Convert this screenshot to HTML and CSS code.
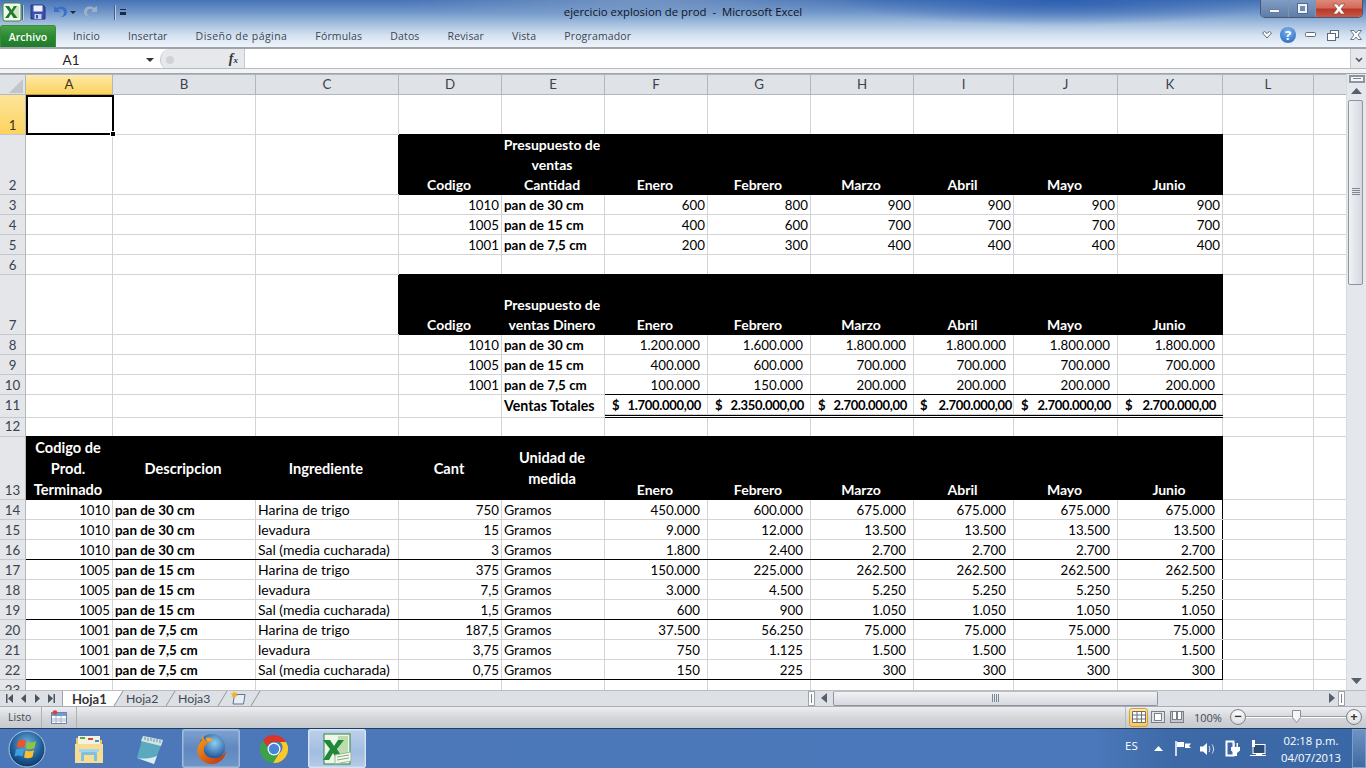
FILE: index.html
```html
<!DOCTYPE html>
<html lang="es">
<head>
<meta charset="utf-8">
<title>ejercicio explosion de prod - Microsoft Excel</title>
<link rel="stylesheet" href="styles.css">
</head>
<body>
<div class="app">
  <header class="chrome">
    <div class="titlebar">
      <div class="qat">
        <svg class="ico-app" width="20" height="20" viewBox="0 0 20 20"><rect x="1" y="1" width="18" height="18" rx="2" fill="#f3f8ef" stroke="#3f8a3f"/><rect x="11" y="4" width="6" height="12" fill="#cfe5c4"/><path d="M3 4h4l2.5 4L12 4h3l-4 6 4.500 6h-4l-2.500-4-2.500 4H3l4.500-6z" fill="#1f7a2c"/></svg>
        <span class="qsep"></span>
        <svg class="ico-save" width="16" height="16" viewBox="0 0 16 16"><path d="M1 1h12l2 2v12H1z" fill="#3b4fae" stroke="#27357f"/><rect x="3.500" y="1.500" width="9" height="6" fill="#eef1fb"/><rect x="4.500" y="10" width="7" height="5" fill="#c8cfe8"/><rect x="6" y="11" width="2" height="3.500" fill="#3b4fae"/></svg>
        <svg class="ico-undo" width="16" height="16" viewBox="0 0 16 16"><path d="M2 2v6h6L6 6c3-2 6-.500 6 2.500 0 2-1 3.500-3 4.500 4 0 6-2.500 6-5 0-5-6-7-10-4z" fill="#3d6fc4"/></svg>
        <span class="drop"></span>
        <svg class="ico-redo" width="16" height="16" viewBox="0 0 16 16"><path d="M14 2v6H8l2-2C7 4 4 5.500 4 8.500c0 2 1 3.500 3 4.500-4 0-6-2.500-6-5 0-5 6-7 10-4z" fill="#9fb0c4"/></svg>
        <span class="drop drop-off"></span>
        <span class="qsep qsep-2"></span>
        <span class="qcustom"></span>
      </div>
      <div class="doc-title">ejercicio explosion de prod&nbsp; -&nbsp; Microsoft Excel</div>
      <div class="winbtns">
        <span class="wb wb-min"><i></i></span>
        <span class="wb wb-max"><i></i></span>
        <span class="wb wb-close">
          <svg width="14" height="12" viewBox="0 0 14 12"><path d="M1 1h4l2 2.500L9 1h4L9 6l4 5H9L7 8.500 5 11H1l4-5z" fill="#fff" stroke="#7a3a33" stroke-width=".6"/></svg>
        </span>
      </div>
    </div>
    <nav class="ribbon">
      <span class="tab-file">Archivo</span>
      <span class="rtab">Inicio</span>
      <span class="rtab">Insertar</span>
      <span class="rtab rtab-wide">Diseño de página</span>
      <span class="rtab">Fórmulas</span>
      <span class="rtab">Datos</span>
      <span class="rtab">Revisar</span>
      <span class="rtab">Vista</span>
      <span class="rtab">Programador</span>
      <div class="rib-right">
        <svg width="10" height="8" viewBox="0 0 10 8"><path d="M.5 2L2.500.5 5 2.500 7.500.5 9.500 2 5 7z" fill="#fff" stroke="#5a6b7f"/></svg>
        <span class="help">?</span>
        <svg class="rr-min" width="11" height="6" viewBox="0 0 11 6"><rect x=".5" y=".5" width="10" height="4" rx="1" fill="#fff" stroke="#5a6b7f"/></svg>
        <svg class="rr-res" width="12" height="11" viewBox="0 0 12 11"><rect x="3.500" y=".5" width="8" height="7" fill="#fff" stroke="#5a6b7f"/><rect x=".5" y="3.500" width="8" height="7" fill="#fff" stroke="#5a6b7f"/></svg>
        <svg class="rr-x" width="12" height="10" viewBox="0 0 12 10"><path d="M.5.5h3.500L6 3 8 .5h3.500L8 5l3.500 4.500H8L6 7 4 9.500H.5L4 5z" fill="#fff" stroke="#5a6b7f" stroke-width=".9"/></svg>
      </div>
    </nav>
  </header>

  <div class="formula">
    <div class="namebox"><span class="nb-text">A1</span><span class="nb-arrow"></span></div>
    <div class="fxwrap"><span class="fx-dot"></span><span class="fx">f<sub>x</sub></span></div>
    <div class="finput"></div>
    <div class="fexpand"><svg width="8" height="6" viewBox="0 0 8 6"><path d="M1 1l3 3 3-3" fill="none" stroke="#555" stroke-width="1.600"/></svg></div>
  </div>

  <main class="sheet">
    <div class="gridwrap">
      <table class="grid">
        <colgroup>
          <col class="w26"><col class="w87"><col class="w143"><col class="w143"><col class="w103"><col class="w103"><col class="w103"><col class="w103"><col class="w103"><col class="w100"><col class="w104"><col class="w105"><col class="w91"><col class="w33">
        </colgroup>
        <tr class="h21 head">
          <th class="corner"><svg width="15" height="15" viewBox="0 0 15 15"><path d="M15 1v14H1z" fill="#c2c6cb"/></svg></th>
          <th class="csel">A</th><th>B</th><th>C</th><th>D</th><th>E</th><th>F</th><th>G</th><th>H</th><th>I</th><th>J</th><th>K</th><th>L</th><th></th>
        </tr>
        <tr class="h40"><th class="rsel">1</th><td class="cursor"><span class="selbox"><i></i></span></td><td></td><td></td><td class="u"></td><td class="u"></td><td class="u"></td><td class="u"></td><td class="u"></td><td class="u"></td><td class="u"></td><td class="u"></td><td></td><td></td></tr>
        <tr class="h60"><th>2</th><td></td><td></td><td class="kr"></td><td class="k">Codigo</td><td class="k">Presupuesto de<br>ventas<br>Cantidad</td><td class="k">Enero</td><td class="k">Febrero</td><td class="k">Marzo</td><td class="k">Abril</td><td class="k">Mayo</td><td class="k">Junio</td><td></td><td></td></tr>
        <tr class="h20"><th>3</th><td></td><td></td><td></td><td class="n">1010</td><td class="b">pan de 30 cm</td><td class="n">600</td><td class="n">800</td><td class="n">900</td><td class="n">900</td><td class="n">900</td><td class="n">900</td><td></td><td></td></tr>
        <tr class="h20"><th>4</th><td></td><td></td><td></td><td class="n">1005</td><td class="b">pan de 15 cm</td><td class="n">400</td><td class="n">600</td><td class="n">700</td><td class="n">700</td><td class="n">700</td><td class="n">700</td><td></td><td></td></tr>
        <tr class="h20"><th>5</th><td></td><td></td><td></td><td class="n">1001</td><td class="b">pan de 7,5 cm</td><td class="n">200</td><td class="n">300</td><td class="n">400</td><td class="n">400</td><td class="n">400</td><td class="n">400</td><td></td><td></td></tr>
        <tr class="h20"><th>6</th><td></td><td></td><td></td><td class="u"></td><td class="u"></td><td class="u"></td><td class="u"></td><td class="u"></td><td class="u"></td><td class="u"></td><td class="u"></td><td></td><td></td></tr>
        <tr class="h60"><th>7</th><td></td><td></td><td class="kr"></td><td class="k">Codigo</td><td class="k">Presupuesto de<br>ventas Dinero</td><td class="k">Enero</td><td class="k">Febrero</td><td class="k">Marzo</td><td class="k">Abril</td><td class="k">Mayo</td><td class="k">Junio</td><td></td><td></td></tr>
        <tr class="h20"><th>8</th><td></td><td></td><td></td><td class="n">1010</td><td class="b">pan de 30 cm</td><td class="a">1.200.000</td><td class="a">1.600.000</td><td class="a">1.800.000</td><td class="a">1.800.000</td><td class="a">1.800.000</td><td class="a">1.800.000</td><td></td><td></td></tr>
        <tr class="h20"><th>9</th><td></td><td></td><td></td><td class="n">1005</td><td class="b">pan de 15 cm</td><td class="a">400.000</td><td class="a">600.000</td><td class="a">700.000</td><td class="a">700.000</td><td class="a">700.000</td><td class="a">700.000</td><td></td><td></td></tr>
        <tr class="h20"><th>10</th><td></td><td></td><td></td><td class="n">1001</td><td class="b">pan de 7,5 cm</td><td class="a u">100.000</td><td class="a u">150.000</td><td class="a u">200.000</td><td class="a u">200.000</td><td class="a u">200.000</td><td class="a u">200.000</td><td></td><td></td></tr>
        <tr class="h23 tot"><th>11</th><td></td><td></td><td></td><td></td><td class="b vt">Ventas Totales</td>
          <td class="dbl"><div class="acc"><span>$</span><span>1.700.000,00</span></div></td>
          <td class="dbl"><div class="acc"><span>$</span><span>2.350.000,00</span></div></td>
          <td class="dbl"><div class="acc"><span>$</span><span>2.700.000,00</span></div></td>
          <td class="dbl"><div class="acc acc-tight"><span>$</span><span>2.700.000,00</span></div></td>
          <td class="dbl"><div class="acc"><span>$</span><span>2.700.000,00</span></div></td>
          <td class="dbl"><div class="acc"><span>$</span><span>2.700.000,00</span></div></td>
          <td></td><td></td></tr>
        <tr class="h19 gap"><th>12</th><td class="u"></td><td class="u"></td><td class="u"></td><td class="u"></td><td class="u"></td><td class="u"></td><td class="u"></td><td class="u"></td><td class="u"></td><td class="u"></td><td class="u"></td><td></td><td></td></tr>
        <tr class="h63"><th>13</th><td class="k big mid">Codigo de<br>Prod.<br>Terminado</td><td class="k big mid">Descripcion</td><td class="k big mid">Ingrediente</td><td class="k big mid">Cant</td><td class="k big mid">Unidad de<br>medida</td><td class="k">Enero</td><td class="k">Febrero</td><td class="k">Marzo</td><td class="k">Abril</td><td class="k">Mayo</td><td class="k">Junio</td><td></td><td></td></tr>
        <tr class="h20"><th>14</th><td class="n">1010</td><td class="b">pan de 30 cm</td><td>Harina de trigo</td><td class="n">750</td><td>Gramos</td><td class="a">450.000</td><td class="a">600.000</td><td class="a">675.000</td><td class="a">675.000</td><td class="a">675.000</td><td class="a rb">675.000</td><td></td><td></td></tr>
        <tr class="h20"><th>15</th><td class="n">1010</td><td class="b">pan de 30 cm</td><td>levadura</td><td class="n">15</td><td>Gramos</td><td class="a">9.000</td><td class="a">12.000</td><td class="a">13.500</td><td class="a">13.500</td><td class="a">13.500</td><td class="a rb">13.500</td><td></td><td></td></tr>
        <tr class="h20 line"><th>16</th><td class="n">1010</td><td class="b">pan de 30 cm</td><td>Sal (media cucharada)</td><td class="n">3</td><td>Gramos</td><td class="a">1.800</td><td class="a">2.400</td><td class="a">2.700</td><td class="a">2.700</td><td class="a">2.700</td><td class="a rb">2.700</td><td class="free"></td><td class="free"></td></tr>
        <tr class="h20"><th>17</th><td class="n">1005</td><td class="b">pan de 15 cm</td><td>Harina de trigo</td><td class="n">375</td><td>Gramos</td><td class="a">150.000</td><td class="a">225.000</td><td class="a">262.500</td><td class="a">262.500</td><td class="a">262.500</td><td class="a rb">262.500</td><td></td><td></td></tr>
        <tr class="h20"><th>18</th><td class="n">1005</td><td class="b">pan de 15 cm</td><td>levadura</td><td class="n">7,5</td><td>Gramos</td><td class="a">3.000</td><td class="a">4.500</td><td class="a">5.250</td><td class="a">5.250</td><td class="a">5.250</td><td class="a rb">5.250</td><td></td><td></td></tr>
        <tr class="h20 line"><th>19</th><td class="n">1005</td><td class="b">pan de 15 cm</td><td>Sal (media cucharada)</td><td class="n">1,5</td><td>Gramos</td><td class="a">600</td><td class="a">900</td><td class="a">1.050</td><td class="a">1.050</td><td class="a">1.050</td><td class="a rb">1.050</td><td class="free"></td><td class="free"></td></tr>
        <tr class="h20"><th>20</th><td class="n">1001</td><td class="b">pan de 7,5 cm</td><td>Harina de trigo</td><td class="n">187,5</td><td>Gramos</td><td class="a">37.500</td><td class="a">56.250</td><td class="a">75.000</td><td class="a">75.000</td><td class="a">75.000</td><td class="a rb">75.000</td><td></td><td></td></tr>
        <tr class="h20"><th>21</th><td class="n">1001</td><td class="b">pan de 7,5 cm</td><td>levadura</td><td class="n">3,75</td><td>Gramos</td><td class="a">750</td><td class="a">1.125</td><td class="a">1.500</td><td class="a">1.500</td><td class="a">1.500</td><td class="a rb">1.500</td><td></td><td></td></tr>
        <tr class="h20 line"><th>22</th><td class="n">1001</td><td class="b">pan de 7,5 cm</td><td>Sal (media cucharada)</td><td class="n">0,75</td><td>Gramos</td><td class="a">150</td><td class="a">225</td><td class="a">300</td><td class="a">300</td><td class="a">300</td><td class="a rb">300</td><td class="free"></td><td class="free"></td></tr>
        <tr class="h20"><th>23</th><td></td><td></td><td></td><td></td><td></td><td></td><td></td><td></td><td></td><td></td><td></td><td></td><td></td></tr>
      </table>
    </div>
    <aside class="vscroll">
      <span class="vsplit"><i></i></span>
      <span class="varrow"><svg width="11" height="6" viewBox="0 0 11 6"><path d="M5.500 0L11 6H0z" fill="#56606c"/></svg></span>
      <div class="vtrack">
        <div class="vthumb"><svg width="8" height="8" viewBox="0 0 8 8"><path d="M0 .5h8M0 2.500h8M0 4.500h8M0 6.500h8" stroke="#7b8794"/></svg></div>
      </div>
      <span class="varrow"><svg width="11" height="6" viewBox="0 0 11 6"><path d="M0 0h11L5.500 6z" fill="#56606c"/></svg></span>
    </aside>
  </main>

  <div class="tabsbar">
    <div class="navbtns">
      <svg width="8" height="9" viewBox="0 0 8 9"><path d="M0 0h1.500v9H0zM7 0v9L2 4.500z" fill="#4a5560"/></svg>
      <svg width="6" height="9" viewBox="0 0 6 9"><path d="M5 0v9L0 4.500z" fill="#4a5560"/></svg>
      <svg width="6" height="9" viewBox="0 0 6 9"><path d="M1 0v9l5-4.500z" fill="#4a5560"/></svg>
      <svg width="8" height="9" viewBox="0 0 8 9"><path d="M6.500 0H8v9H6.500zM1 0v9l5-4.500z" fill="#4a5560"/></svg>
    </div>
    <span class="stab stab-on"><span class="stab-label">Hoja1</span></span>
    <span class="stab">Hoja2</span>
    <span class="stab">Hoja3</span>
    <span class="stab stab-new"><svg width="16" height="14" viewBox="0 0 16 14"><path d="M4.500 3.500h10.500l-1.500 9.500H3z" fill="#e9eef6" stroke="#5f738c"/><path d="M4 0l1 2 2.200-.5L6.500 3.500 8 5 5.800 5.300 5 7.500 3.800 5.500 1.500 6 2.300 4 .5 2.500 3 2.300z" fill="#f0b52c"/></svg></span>
    <div class="tabs-fill"></div>
    <span class="hsplit"><i></i></span>
    <span class="harrow"><svg width="6" height="10" viewBox="0 0 6 10"><path d="M6 0v10L0 5z" fill="#56606c"/></svg></span>
    <div class="htrack">
      <div class="hthumb"><svg width="8" height="8" viewBox="0 0 8 8"><path d="M.5 0v8M2.500 0v8M4.500 0v8M6.500 0v8" stroke="#7b8794"/></svg></div>
    </div>
    <span class="harrow harrow-r"><svg width="6" height="10" viewBox="0 0 6 10"><path d="M0 0v10l6-5z" fill="#56606c"/></svg></span>
    <span class="hsplit hsplit-r"><i></i></span>
    <div class="tabs-corner"></div>
  </div>

  <footer class="status">
    <span class="st-ready">Listo</span>
    <span class="st-macro"><svg width="16" height="14" viewBox="0 0 16 14"><rect x=".5" y="2.500" width="15" height="11" fill="#fff" stroke="#6f87a6"/><rect x="1" y="3" width="14" height="3" fill="#6f9bd1"/><path d="M5 6v7M10 6v7M1 9h14M1 11h14" stroke="#9fb4cc"/><circle cx="4" cy="2.500" r="2.300" fill="#d8452e"/></svg></span>
    <div class="st-fill"></div>
    <div class="views">
      <span class="view view-on"><svg width="14" height="12" viewBox="0 0 14 12"><path d="M.5.5h13v11H.5zM.5 4h13M.5 8h13M5 .5v11M9.500.5v11" fill="#fff" stroke="#6b6f75"/></svg></span>
      <span class="view"><svg width="14" height="12" viewBox="0 0 14 12"><rect x=".5" y=".5" width="13" height="11" fill="#dfe2e6" stroke="#7b8087"/><rect x="3.500" y="2.500" width="7" height="7" fill="#fff" stroke="#7b8087"/></svg></span>
      <span class="view"><svg width="14" height="12" viewBox="0 0 14 12"><rect x=".5" y=".5" width="13" height="11" fill="#c3c7cc" stroke="#7b8087"/><rect x="2.500" y=".5" width="4" height="8" fill="#fff" stroke="#7b8087"/><rect x="7.500" y=".5" width="4" height="8" fill="#fff" stroke="#7b8087"/></svg></span>
    </div>
    <span class="zoomtxt">100%</span>
    <div class="zoomctl">
      <span class="zbtn">−</span>
      <span class="zline"><svg class="zthumb" width="9" height="13" viewBox="0 0 9 13"><path d="M.5.5h8v7l-4 5-4-5z" fill="#f4f5f7" stroke="#8a9099"/></svg></span>
      <span class="zbtn">+</span>
    </div>
  </footer>

  <div class="taskbar">
    <span class="orb">
      <svg width="38" height="38" viewBox="0 0 38 38">
        <defs><radialGradient id="orbg" cx=".5" cy=".35" r=".7"><stop offset="0" stop-color="#6fb0dc"/><stop offset=".6" stop-color="#1f5d98"/><stop offset="1" stop-color="#0c2f5a"/></radialGradient></defs>
        <circle cx="19" cy="19" r="18" fill="url(#orbg)" stroke="#a9c6e2"/>
        <path d="M10 11c3-2 6-1 8 0l-1.500 7c-2-1-5-1.500-8 0z" fill="#e8562a"/>
        <path d="M19.500 11.500c3 1.500 6 1 8.500-.5l-1.500 7c-3 1.500-6 1.500-8.500.5z" fill="#8cc63f"/>
        <path d="M8 19.500c3-1.500 6-1 8 0l-1.500 7c-2-1-5-1.500-8 0z" fill="#3fa0e0"/>
        <path d="M17.500 20.500c3 1 6 1 8.500-.5l-1.500 7c-3 1.500-6 1.500-8.500.5z" fill="#fcbf2c"/>
      </svg>
    </span>
    <span class="tb tb-p1">
      <svg width="32" height="32" viewBox="0 0 32 32"><path d="M3 5h10l2 2h14v22H3z" fill="#e8c66a"/><rect x="5" y="3" width="22" height="8" fill="#f5f2e2"/><rect x="7" y="4" width="5" height="2" fill="#52b043"/><rect x="15" y="5" width="5" height="2" fill="#d5473a"/><rect x="22" y="7" width="4" height="2" fill="#3c8fd8"/><path d="M2 11h28v19H2z" fill="#f6dd93"/><path d="M8 28v-7c0-2 1-3 3-3h10c2 0 3 1 3 3v7h-3v-6H11v6z" fill="#7fbfe0"/><rect x="6" y="16" width="20" height="3" fill="#a5d5ea"/></svg>
    </span>
    <span class="tb tb-p2">
      <svg width="32" height="32" viewBox="0 0 32 32"><path d="M9 3l20 4-9 24-17-6z" fill="#5ba9bf"/><path d="M9 3l20 4-2 6L7 8z" fill="#cfe3ea"/><path d="M3 25l17 6 3-8c-8 3-15 3-20 2z" fill="#d7eef3"/><path d="M11 4v3M14 5v3M17 5v3M20 6v3M23 6v3M26 7v3" stroke="#7d8d92"/></svg>
    </span>
    <span class="tb tb-box tb-ff">
      <svg width="34" height="34" viewBox="0 0 34 34"><defs><radialGradient id="ffg" cx=".6" cy=".35" r=".6"><stop offset="0" stop-color="#8ed0f0"/><stop offset="1" stop-color="#1d4f9a"/></radialGradient><linearGradient id="ffo" x1="0" y1="0" x2="1" y2="1"><stop offset="0" stop-color="#f7a21d"/><stop offset="1" stop-color="#b92d12"/></linearGradient></defs><circle cx="18" cy="15" r="13" fill="url(#ffg)"/><path d="M8 3c-1 3 0 5 0 5C3 13 2 20 5 25c4 7 13 9 20 5 4-2 7-7 7-12-2 5-7 9-13 8-6 0-10-5-9-10 1-3 3-4 5-5-2-1-5-3-7-8z" fill="url(#ffo)"/><path d="M12 6c3-1 5 0 7 2l-4 2c-2 0-3-2-3-4z" fill="#f7a21d"/></svg>
    </span>
    <span class="tb tb-p3">
      <svg width="30" height="30" viewBox="0 0 30 30"><path d="M15 1a14 14 0 0 1 12.100 7H15a7 7 0 0 0-6.600 4.600L3.900 6.300A14 14 0 0 1 15 1z" fill="#d7362b"/><path d="M27.100 8A14 14 0 0 1 14 29l5.900-9.500A7 7 0 0 0 21 8z" fill="#f7c92b"/><path d="M14 29A14 14 0 0 1 3.900 6.300l6 10.300a7 7 0 0 0 9.600 3z" fill="#3ba14a"/><circle cx="15" cy="15" r="6.500" fill="#fff"/><circle cx="15" cy="15" r="5.200" fill="#4a86d8"/></svg>
    </span>
    <span class="tb tb-box tb-xl">
      <svg width="32" height="32" viewBox="0 0 32 32"><rect x="3" y="1" width="26" height="30" fill="#eef6e9" stroke="#2e8540"/><path d="M17 3h10v22H17z" fill="#bcdcae"/><path d="M2 7h7l4 6 4-6h6l-7 9 7 11h-7l-4-7-4 7H2l7-11z" fill="#21883a"/><path d="M14 22l16-3v9l-16 3z" fill="#f4f8f0" stroke="#9eb89a"/><path d="M16 24l12-2M16 27l12-2" stroke="#7fae7a"/></svg>
    </span>
    <div class="tb-fill"></div>
    <span class="lang">ES</span>
    <div class="tray">
      <svg width="9" height="5" viewBox="0 0 9 5"><path d="M4.500 0L9 5H0z" fill="#fff"/></svg>
      <svg width="16" height="15" viewBox="0 0 16 15"><path d="M1 0v15" stroke="#fff" stroke-width="1.500"/><path d="M2 1h7v5H2zM10 2.500h6l-2 2.500 2 2h-6z" fill="#fff"/></svg>
      <svg width="16" height="14" viewBox="0 0 16 14"><path d="M0 4.500h3L7 1v12L3 9.500H0z" fill="#fff"/><path d="M9 4c1 1.500 1 4.500 0 6M12 2.500c2 2.500 2 6.500 0 9" fill="none" stroke="#dfe9f5"/></svg>
      <svg width="16" height="17" viewBox="0 0 16 17"><path d="M1.500 1.500h7v14h-7z" fill="none" stroke="#fff" stroke-width="2"/><path d="M6 7h9v3.500l-3 2.500v3h-3v-3L6 10.500zM8 3h1.500v4H8zM11.500 3H13v4h-1.500z" fill="#fff"/></svg>
      <svg width="16" height="17" viewBox="0 0 16 17"><rect x="3" y="4.500" width="12" height="9" fill="#2c4c78" stroke="#fff"/><path d="M6 14v2h6v-2" fill="#fff"/><path d="M2 0h3v7H2z" fill="#fff"/><path d="M0 15.500h16" stroke="#fff"/></svg>
    </div>
    <div class="clock"><span>02:18 p.m.</span><span>04/07/2013</span></div>
    <span class="showdesk"></span>
  </div>
</div>
</body>
</html>
```
FILE: styles.css
```css
* { box-sizing: border-box; }
html, body { margin: 0; padding: 0; }
body { width: 1366px; height: 768px; overflow: hidden; background: #fff; font-family: "Open Sans", "Liberation Sans", sans-serif; }
.app { display: flex; flex-direction: column; width: 1366px; height: 768px; }

/* window chrome */
.chrome { height: 49px; border-bottom: 2px solid #9ea4ab;
  background:
    radial-gradient(ellipse 220px 26px at 1060px 0, rgba(42,92,176,.85), rgba(42,92,176,0)),
    radial-gradient(ellipse 240px 20px at 640px 0, rgba(150,175,205,.55), rgba(150,175,205,0)),
    linear-gradient(to bottom, #4773b5 0, #6f96ca 12px, #a5c0df 24px, #d7e3f1 36px, #eef3f9 47px); }
.titlebar { height: 24px; display: flex; align-items: flex-start; position: relative; }
.qat { display: flex; align-items: center; padding: 2px 0 0 2px; height: 22px; width: 300px; }
.qsep { width: 1px; height: 15px; background: #4a5f7c; box-shadow: 1px 0 0 rgba(255,255,255,.5); }
.drop { width: 0; height: 0; margin-left: 2px; border: 3px solid transparent; border-top: 3px solid #1d2a3c; border-bottom: 0; }
.drop-off { border-top-color: #8396ae; }
.ico-save { margin-left: 7px; }
.ico-undo { margin-left: 6px; }
.ico-redo { margin-left: 7px; }
.qsep-2 { margin-left: 7px; }
.qcustom { width: 6px; height: 6px; border-top: 1px solid #1d2a3c; border-bottom: 3px solid #1d2a3c; margin-left: 5px; }
.doc-title { position: absolute; left: 0; right: 0; top: 4px; text-align: center; font-size: 11.400px; line-height: 16px; color: #10151c; }
.winbtns { position: absolute; right: 3px; top: 0; display: flex; height: 18px; border: 1px solid #46576e; border-top: 0; border-radius: 0 0 5px 5px; overflow: hidden; }
.wb { display: flex; align-items: center; justify-content: center; height: 17px; }
.wb-min { width: 28px; border-right: 1px solid #7f93ad; background: linear-gradient(#7f9cc5, #5f7da9); }
.wb-min i { display: block; width: 11px; height: 4px; margin-top: 4px; background: #f2f5f9; border: 1px solid #6b7f9a; }
.wb-max { width: 27px; border-right: 1px solid #7f93ad; background: linear-gradient(#7f9cc5, #5f7da9); }
.wb-max i { display: block; width: 9px; height: 9px; border: 2px solid #eef2f7; outline: 1px solid #566a85; }
.wb-close { width: 46px; background: linear-gradient(#dd8a7a 0, #d66a58 45%, #b8382a 55%, #c95a48 100%); }
.ribbon { height: 23px; display: flex; align-items: flex-start; font-size: 10.500px; line-height: 16px; color: #3b4653; position: relative; padding-top: 1px; }
.tab-file { width: 56px; height: 22px; text-align: center; color: #fff; padding-top: 3px; font-size: 10.500px; font-weight: 600; border-radius: 3px 3px 0 0; border: 1px solid #3d8c3a; border-bottom: 0; background: linear-gradient(#4aa24b, #2b8a32 50%, #1f7a2b); }
.rtab { padding: 3px 14px 0; letter-spacing: .15px; }
.rtab-wide { letter-spacing: .45px; }
.tab-file + .rtab { margin-left: 3px; }
.rib-right { position: absolute; right: 4px; top: 1px; display: flex; align-items: center; height: 20px; }
.help { width: 16px; height: 16px; margin-left: 8px; border-radius: 50%; background: radial-gradient(circle at 50% 30%, #7fb4ea, #1f63bd); color: #fff; font-weight: 700; font-size: 13px; line-height: 16px; text-align: center; }
.rr-min { margin-left: 9px; }
.rr-res { margin-left: 11px; }
.rr-x { margin-left: 11px; }

/* formula bar */
.formula { height: 25px; display: flex; align-items: flex-start; background: #fff; border-bottom: 3px solid #fff; position: relative; }
.formula::after { content: ""; position: absolute; left: 0; right: 0; bottom: -3px; height: 4px; border-top: 1px solid #b6bbc1; border-bottom: 1px solid #9ea4ab; background: #f2f3f5; }
.namebox { width: 160px; height: 21px; display: flex; align-items: center; font-family: "Lato", sans-serif; color: #222; }
.nb-text { width: 142px; text-align: center; font-size: 13.500px; }
.nb-arrow { width: 0; height: 0; border: 4px solid transparent; border-top: 4px solid #333; border-bottom: 0; margin-left: 4px; }
.fxwrap { width: 85px; height: 21px; display: flex; align-items: center; background: #e6e8eb; border-radius: 10px 0 0 10px; border: 1px solid #c5c9ce; border-width: 0 1px 0 1px; position: relative; }
.fx-dot { width: 8px; height: 8px; margin-left: 5px; border-radius: 50%; background: #cfd3d8; }
.fx { position: absolute; right: 6px; top: 1px; font: italic 700 14px/18px "Liberation Serif", serif; color: #333; }
.fx sub { font-size: 9px; vertical-align: baseline; }
.finput { flex: 1; height: 21px; }
.fexpand { width: 16px; height: 21px; display: flex; align-items: center; justify-content: center; background: #e6e8eb; border-left: 1px solid #c5c9ce; }

/* sheet */
.sheet { height: 616px; display: flex; }
.gridwrap { width: 1346px; height: 616px; overflow: hidden; }
.grid { table-layout: fixed; width: 1346px; border-collapse: separate; border-spacing: 0; font-family: "Lato", "Liberation Sans", sans-serif; font-size: 14px; color: #000; }
.w26 { width: 26px; } .w87 { width: 87px; } .w143 { width: 143px; } .w103 { width: 103px; } .w100 { width: 100px; } .w104 { width: 104px; } .w105 { width: 105px; } .w91 { width: 91px; } .w33 { width: 33px; }
.h19 { height: 19px; } .h20 { height: 20px; } .h21 { height: 21px; } .h23 { height: 23px; } .h40 { height: 40px; } .h60 { height: 60px; } .h63 { height: 63px; }
.grid td { --bb: #d4d4d4; --br: #d4d4d4; padding: 0 3px 1px 2px; line-height: 19px; vertical-align: bottom; white-space: nowrap; overflow: hidden; box-shadow: inset 0 -1px 0 var(--bb), inset -1px 0 0 var(--br); }
.grid th { padding: 1px 0 0; font-size: 13.300px; font-weight: 400; line-height: 19px; vertical-align: bottom; text-align: center; color: #39434f; background: #e4e6e9; border-right: 1px solid #b3b6ba; box-shadow: inset 0 -1px 0 #c4c7cb; }
.grid .head th { padding: 0; vertical-align: middle; background: #dfe2e6; box-shadow: none; border-top: 1px solid #b3b6ba; border-bottom: 1px solid #b3b6ba; }
.grid .head .corner { padding: 2px 0 0 8px; text-align: left; }
.corner svg { display: block; }
.grid .head .csel { background: linear-gradient(#fde9a8, #fbd35d); color: #3d3320; border-bottom-color: #c29b3c; }
.grid .rsel { background: linear-gradient(#fde49a, #fcd35d); color: #3d3320; }
.grid .n { font-size: 13.300px; text-align: right; padding: 1px 3px 0 2px; }
.grid .a { font-size: 13.300px; text-align: right; padding: 1px 8px 0 2px; }
.grid .b { font-size: 13.400px; font-weight: 700; padding: 1px 3px 0 2px; }
.grid .vt { font-size: 14.200px; }
.grid .u { --bb: #000; }
.grid .k { --bb: #000; --br: #000; padding: 0 3px 0 0; background: #000; color: #fff; font-weight: 700; text-align: center; line-height: 20px; }
.grid .big { font-size: 14.600px; line-height: 21px; }
.grid .mid { vertical-align: middle; }
.grid .kr { --br: #000; }
.grid .rb { --br: #000; }
.grid .line td { --bb: #000; }
.grid .line .free { --bb: #d4d4d4; }
.grid .tot th, .grid .tot td { vertical-align: top; }
.grid .gap th { padding: 0; line-height: 16px; vertical-align: top; }
.grid .gap td { padding: 0; line-height: 16px; }
.grid .dbl { border-bottom: 3px double #000; line-height: 19px; font-size: 13px; letter-spacing: -.3px; font-weight: 700; padding: 1px 0 0; }
.acc { display: flex; justify-content: space-between; padding: 0 7px; }
.acc-tight { padding: 0 2px 0 6px; }
.grid .cursor { position: relative; overflow: visible; }
.selbox { position: absolute; left: 0; top: 0; right: -1px; bottom: 0; border: 2px solid #000; z-index: 2; }
.selbox i { position: absolute; right: -4px; bottom: -4px; width: 6px; height: 6px; background: #000; border: 1px solid #fff; }

.vscroll { width: 20px; height: 616px; display: flex; flex-direction: column; align-items: center; background: #e4e7eb; border-left: 1px solid #d7dade; }
.vsplit { width: 16px; height: 8px; margin-top: 1px; background: #f6f7f9; border: 2px solid #8f959c; display: flex; align-items: center; justify-content: center; }
.vsplit i { width: 8px; height: 1px; background: #7b828a; }
.varrow { height: 17px; width: 100%; display: flex; align-items: center; justify-content: center; flex: none; }
.vtrack { flex: 1; width: 100%; padding: 0 3px 0 1px; }
.vthumb { width: 15px; height: 185px; border: 1px solid #8f959c; border-radius: 2px; background: linear-gradient(to right, #f1f2f5, #d5d9df); display: flex; align-items: center; justify-content: center; }
.vthumb svg { display: block; }

/* sheet tabs */
.tabsbar { height: 17px; display: flex; align-items: stretch; background: #dde0e4; line-height: 16px; color: #3e4853; border-top: 1px solid #b9bdc2; position: relative; z-index: 3; border-bottom: 1px solid #a8adb3; }
.navbtns { width: 63px; flex: none; display: flex; align-items: center; justify-content: space-between; padding: 0 7px 0 6px; border-right: 1px solid #9ea4ab; }
.stab { width: 52px; flex: none; padding-left: 8px; position: relative; font-family: "Lato", sans-serif; font-size: 12.300px; }
.stab::after { content: ""; position: absolute; right: -1px; top: 0; bottom: 0; width: 1px; background: #8f959c; transform: skewX(-31deg); }
.stab-on { width: 55px; padding-left: 9px; font-size: 13px; font-weight: 700; color: #333; background: linear-gradient(to right, #fff 51px, transparent 51px); }
.stab-on::before { content: ""; position: absolute; right: 0; top: 0; bottom: 0; width: 12px; background: #fff; transform: skewX(-31deg); }
.stab-label { position: relative; z-index: 1; }
.stab-new { width: 33px; padding: 0 0 0 8px; }
.stab-new svg { display: block; }
.tabs-fill { flex: 1; }
.hsplit { width: 7px; display: flex; align-items: center; justify-content: center; background: #fff; border: 1px solid #9ea4ab; height: 15px; }
.hsplit i { width: 1px; height: 9px; background: #7b828a; }
.harrow { width: 18px; display: flex; align-items: center; justify-content: center; flex: none; }
.harrow-r { width: 13px; }
.htrack { width: 492px; flex: none; background: #dde0e4; }
.hthumb { width: 325px; height: 15px; border-radius: 2px; border: 1px solid #8f959c; border-top-color: #b9bdc2; background: linear-gradient(#f1f2f5, #d5d9df); display: flex; align-items: center; justify-content: center; }
.hthumb svg { display: block; }
.tabs-corner { width: 21px; }

/* status bar */
.status { height: 22px; display: flex; align-items: center; background: linear-gradient(#eceef1, #d4d6da 50%, #c6c9cd); font-size: 10.500px; color: #424a55; }
.st-ready { width: 42px; padding-left: 8px; height: 100%; line-height: 21px; border-right: 1px solid #aeb2b7; }
.st-macro { width: 35px; height: 100%; display: flex; align-items: center; justify-content: center; border-right: 1px solid #aeb2b7; }
.st-fill { flex: 1; }
.views { display: flex; align-items: center; width: 69px; border-left: 1px solid #b6b9bd; height: 100%; padding-left: 3px; }
.view { width: 19px; height: 19px; display: flex; align-items: center; justify-content: center; }
.view-on { border: 1px solid #d9a02f; border-radius: 3px; background: linear-gradient(#fce9a9, #f9c95a); }
.zoomtxt { width: 36px; font-size: 11px; }
.zoomctl { display: flex; align-items: center; width: 132px; margin-right: 4px; }
.zbtn { width: 16px; height: 16px; flex: none; border-radius: 50%; border: 1px solid #7f858c; background: radial-gradient(circle at 50% 30%, #fff, #cfd3d8); text-align: center; line-height: 13px; font-weight: 700; font-size: 13px; color: #333; }
.zline { flex: 1; height: 2px; background: #9ca1a8; border-bottom: 1px solid #fff; position: relative; }
.zthumb { position: absolute; left: 46px; top: -6px; }

/* taskbar */
.taskbar { height: 40px; display: flex; align-items: center; border-top: 1px solid #1f3e66; background: linear-gradient(to right, #4c78b9 0, #4b78ba 80%, #3d69a6 86%, #3a68a6 100%); color: #fff; font-size: 12px; }
.orb { width: 38px; height: 38px; margin-left: 8px; flex: none; }
.orb svg { display: block; }
.tb { display: flex; align-items: center; justify-content: center; height: 39px; flex: none; }
.tb-p1 { width: 32px; margin-left: 27px; }
.tb-p2 { width: 32px; margin-left: 29px; }
.tb-box { width: 58px; border: 1px solid #9fb9d8; border-radius: 2px; background: linear-gradient(#7ea1d0, #5f88c0 50%, #6f95c8); box-shadow: inset 0 0 0 1px rgba(255,255,255,.2); }
.tb-ff { margin-left: 16px; }
.tb-p3 { width: 30px; margin-left: 19px; }
.tb-xl { margin-left: 19px; background: linear-gradient(#bcd0ea, #a2bde0 60%, #b5cbe8); border-color: #d7e3f1; }
.tb-fill { flex: 1; }
.lang { width: 26px; padding-left: 11px; font-size: 11.500px; margin-top: -7px; white-space: nowrap; }
.tray { display: flex; align-items: center; width: 131px; gap: 9px; padding-left: 14px; }
.tray svg:first-child { margin-right: 3px; }
.clock { display: flex; flex-direction: column; align-items: center; width: 70px; margin-left: 5px; font-size: 11.300px; line-height: 17px; white-space: nowrap; }
.showdesk { width: 14px; height: 39px; margin-left: 6px; border: 1px solid #7e9cc4; background: linear-gradient(#6d93c4, #3f6aa4); }
```
